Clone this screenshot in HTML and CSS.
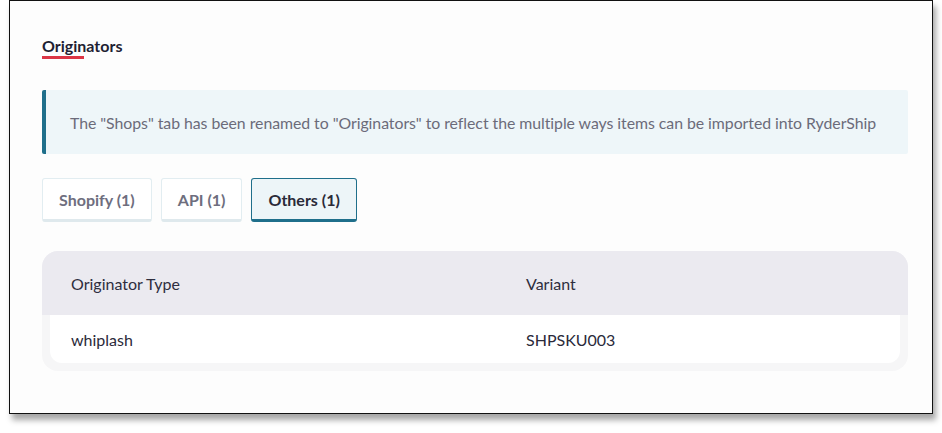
FILE: index.html
```html
<!DOCTYPE html>
<html lang="en">
<head>
<meta charset="utf-8">
<title>Originators</title>
<link rel="stylesheet" href="styles.css">
</head>
<body>
<div class="frame">
  <h2 class="title">Originators</h2>
  <div class="alert">The "Shops" tab has been renamed to "Originators" to reflect the multiple ways items can be imported into RyderShip</div>
  <div class="tabs">
    <button class="tab">Shopify (1)</button>
    <button class="tab">API (1)</button>
    <button class="tab active">Others (1)</button>
  </div>
  <div class="table-card">
    <div class="thead">
      <div class="cell">Originator Type</div>
      <div class="cell">Variant</div>
    </div>
    <div class="tbody">
      <div class="row">
        <div class="cell">whiplash</div>
        <div class="cell">SHPSKU003</div>
      </div>
    </div>
  </div>
</div>
</body>
</html>
```

FILE: styles.css
```css
* { box-sizing: border-box; }
html, body { margin: 0; padding: 0; background: #ffffff; }
body {
  font-family: Lato, "Open Sans", Arial, sans-serif;
  width: 942px;
  height: 433px;
  overflow: hidden;
}
.frame {
  margin-left: 9px;
  width: 924px;
  height: 414px;
  border: 1px solid #111;
  background: #fdfdfd;
  box-shadow: 3px 6px 6px rgba(0, 0, 0, 0.35);
  padding: 35px 24px 0 32px;
}
.title {
  margin: 0;
  font-size: 16px;
  font-weight: 700;
  color: #1f1f33;
  line-height: 20px;
  display: inline-block;
  position: relative;
  padding-bottom: 3px;
}
.title::after {
  content: "";
  position: absolute;
  left: 0;
  bottom: 0;
  width: 42px;
  height: 3px;
  background: #db3545;
}
.alert {
  margin-top: 31px;
  height: 64px;
  background: #eef6f9;
  border-left: 4px solid #1f6f8b;
  border-radius: 2px;
  padding: 0 8px 0 24px;
  display: flex;
  align-items: center;
  font-size: 15.85px;
  letter-spacing: -0.05px;
  color: #6b6b7a;
  white-space: nowrap;
  overflow: hidden;
}
.tabs {
  margin-top: 24px;
  display: flex;
  gap: 9px;
}
.tab {
  font-family: inherit;
  font-size: 16px;
  font-weight: 700;
  color: #6e6e7e;
  background: #ffffff;
  border: 1px solid #e2edf1;
  border-bottom: 3px solid #dfe9ed;
  border-radius: 3px;
  height: 44px;
  padding: 0 16px;
}
.tab.active {
  color: #2a2a38;
  background: #edf5f8;
  border-color: #1f6f8b;
  border-bottom: 3px solid #1f6f8b;
}
.table-card {
  margin-top: 29px;
  background: #f6f6f7;
  border-radius: 16px;
  padding-bottom: 8px;
}
.thead {
  display: flex;
  height: 64px;
  align-items: center;
  background: #ebeaf0;
  border-radius: 16px 16px 0 0;
  font-size: 16px;
  color: #2e2e3e;
}
.tbody {
  margin: 0 8px;
  background: #ffffff;
  border-radius: 0 0 12px 12px;
}
.row {
  display: flex;
  height: 48px;
  align-items: center;
  font-size: 16px;
  color: #2a2a3a;
}
.thead .cell:first-child { padding-left: 29px; width: 484px; }
.row .cell:first-child { padding-left: 21px; width: 476px; }
```
